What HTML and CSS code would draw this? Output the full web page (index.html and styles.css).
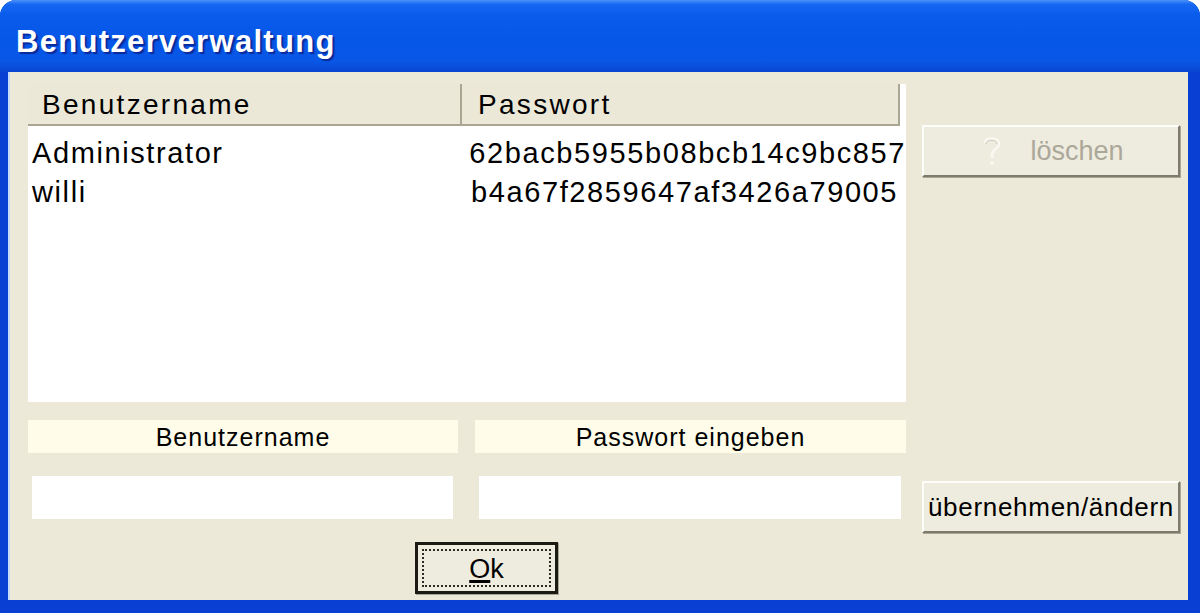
FILE: index.html
```html
<!DOCTYPE html>
<html lang="de">
<head>
  <meta charset="UTF-8">
  <title>Benutzerverwaltung</title>
  <link rel="stylesheet" href="styles.css">
</head>
<body>
  <div class="window">
    <div class="titlebar">Benutzerverwaltung</div>

    <div class="content">
      <div class="main">
        <div class="listview">
          <div class="list-header">
            <div class="col col-name">Benutzername</div>
            <div class="col col-pass">Passwort</div>
          </div>
          <div class="list-body">
            <div class="row">
              <span class="cell cell-name">Administrator</span>
              <span class="cell cell-pass">62bacb5955b08bcb14c9bc857</span>
            </div>
            <div class="row">
              <span class="cell cell-name">willi</span>
              <span class="cell cell-pass">b4a67f2859647af3426a79005</span>
            </div>
          </div>
        </div>

        <div class="fields">
          <div class="field-label">Benutzername</div>
          <div class="field-label">Passwort eingeben</div>
          <div class="field-input"></div>
          <div class="field-input"></div>
        </div>

        <button class="btn btn-ok"><span class="focus"><u>O</u>k</span></button>
      </div>

      <div class="side">
        <button class="btn btn-delete" disabled>
          <svg class="icon" width="24" height="34" viewBox="0 0 24 34">
            <path d="M5 9 C5 3 19 3 19 10 C19 15 12 15 12 21 L12 24" fill="none" stroke="#f8f7f0" stroke-width="3"/>
            <path d="M6 10 C6 5 17 5 17 10" fill="none" stroke="#c9c6b4" stroke-width="1"/>
            <circle cx="12" cy="29" r="2" fill="#f8f7f0"/>
          </svg>
          löschen
        </button>
        <button class="btn btn-apply">übernehmen/ändern</button>
      </div>
    </div>
  </div>
</body>
</html>
```

FILE: styles.css
```css
html, body {
  margin: 0;
  padding: 0;
  background-color: #ffffff;
}

body {
  font-family: 'Liberation Sans', Arial, sans-serif;
  color: #000;
}

.window {
  width: 1200px;
  height: 613px;
  box-sizing: border-box;
  display: flex;
  flex-direction: column;
  background-color: #0a3fd4;
  border-radius: 16px 16px 0 0;
  overflow: hidden;
}

.titlebar {
  height: 72px;
  flex: none;
  box-sizing: border-box;
  padding: 24px 0 0 16px;
  background: linear-gradient(to bottom, #4a93fa 0%, #1668f2 6%, #0a5ceb 20%, #0656e8 60%, #0a57e6 85%, #0845cf 100%);
  color: #ffffff;
  font-size: 31px;
  font-weight: bold;
  letter-spacing: 1.3px;
  text-shadow: 2px 2px 1px #0b2a9a;
}

.content {
  flex: 1;
  margin: 0 12px 13px 8px;
  background-color: #ece9d8;
  border-left: 2px solid #c7d8f8;
  display: flex;
  gap: 16px;
  padding: 12px 8px 0 18px;
}

.main {
  width: 878px;
  display: flex;
  flex-direction: column;
}

/* list view */
.listview {
  height: 318px;
  background-color: #ffffff;
  display: flex;
  flex-direction: column;
}

.list-header {
  display: flex;
  width: 872px;
  height: 40px;
  background-color: #ebe8d8;
  border-bottom: 2px solid #a9a794;
  font-size: 28px;
  letter-spacing: 2.3px;
}

.col {
  box-sizing: border-box;
  padding-top: 5px;
  border-right: 2px solid #a9a794;
}

.col-name {
  width: 434px;
  padding-left: 14px;
}

.col-pass {
  width: 438px;
  padding-left: 16px;
}

.list-body {
  padding-top: 8px;
  font-size: 29px;
  letter-spacing: 1.6px;
}

.row {
  display: flex;
  height: 39px;
  line-height: 39px;
}

.cell-name {
  width: 439px;
  padding-left: 4px;
}

/* labels and inputs */
.fields {
  margin-top: 18px;
  display: grid;
  grid-template-columns: 430px 431px;
  column-gap: 17px;
  row-gap: 23px;
}

.field-label {
  height: 33px;
  line-height: 35px;
  background-color: #fffde9;
  text-align: center;
  font-size: 25px;
  letter-spacing: 1px;
}

.field-input {
  height: 43px;
  margin: 0 5px 0 4px;
  background-color: #ffffff;
}

/* buttons */
.btn {
  font-family: 'Liberation Sans', Arial, sans-serif;
  font-size: 26px;
  color: #000;
  background-color: #eeecdf;
  border: 2px solid;
  border-color: #fcfcf8 #7d7b6e #7d7b6e #fcfcf8;
  box-shadow: 1px 1px 0 #a9a794;
  padding: 0;
  box-sizing: border-box;
}

.btn-ok {
  margin-top: 23px;
  margin-left: 387px;
  width: 143px;
  height: 52px;
  border: 3px solid #1b1b14;
  padding: 4px;
}

.focus {
  display: block;
  height: 100%;
  box-sizing: border-box;
  border: 2px dotted #2b2b24;
  line-height: 36px;
  font-size: 27px;
}

.focus u {
  text-decoration-thickness: 3px;
}

.side {
  width: 258px;
  display: flex;
  flex-direction: column;
}

.btn-delete {
  margin-top: 41px;
  height: 52px;
  display: flex;
  align-items: center;
  justify-content: center;
  gap: 26px;
  color: #aca899;
  font-size: 27px;
  padding-left: 2px;
}

.icon {
  flex: none;
}

.btn-apply {
  margin-top: 304px;
  height: 52px;
  font-size: 26px;
  letter-spacing: 0.7px;
  white-space: nowrap;
}
```
